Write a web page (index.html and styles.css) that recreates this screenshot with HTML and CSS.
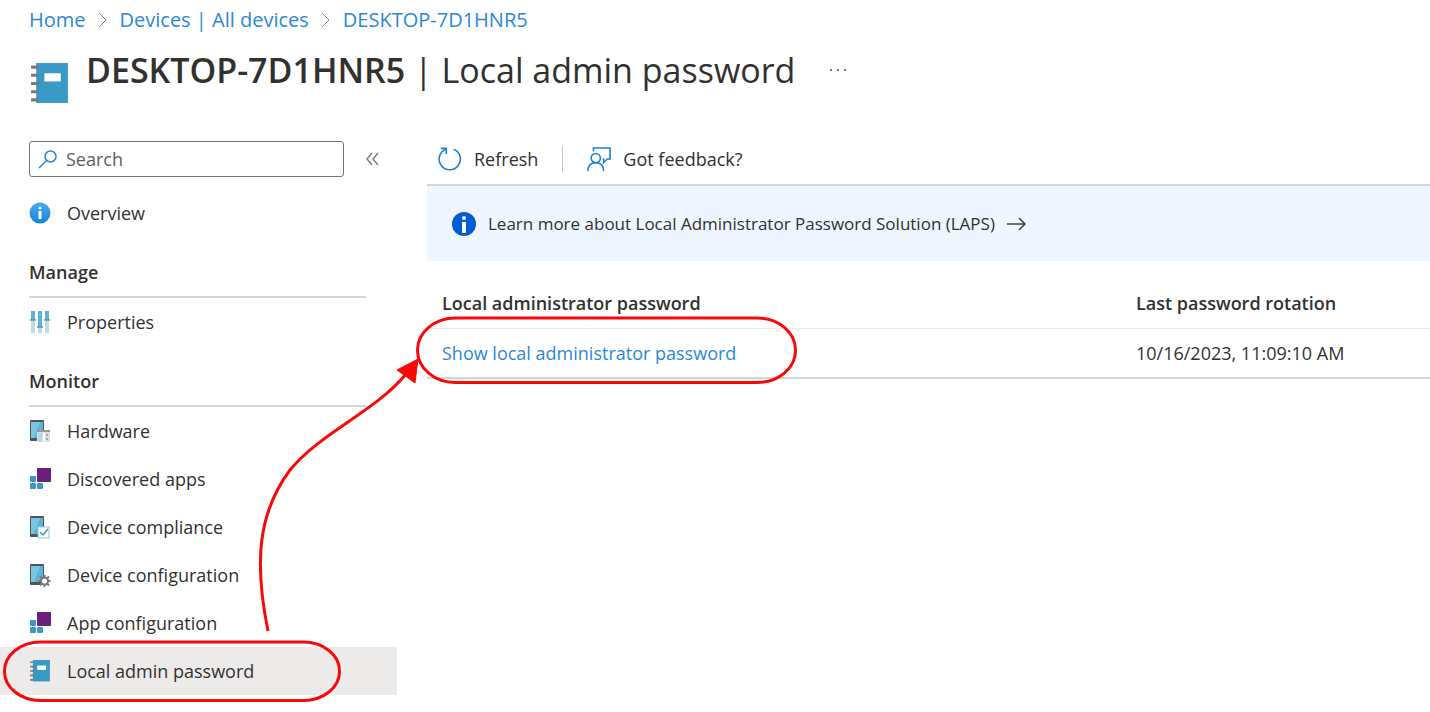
FILE: index.html
```html
<!DOCTYPE html>
<html lang="en">
<head>
  <meta charset="UTF-8">
  <meta name="viewport" content="width=device-width, initial-scale=1.0">
  <title>DESKTOP-7D1HNR5 | Local admin password</title>
  <link rel="stylesheet" href="styles.css">
</head>
<body>
  <!-- Shared icons -->
  <svg class="sprite" aria-hidden="true">
    <symbol id="notebook" viewBox="0 0 40 42">
      <rect x="7" y="1" width="31" height="39" fill="#3999c6"/>
      <path d="M2 5h7M2 13h7M2 21h7M2 29h7M2 37h7" stroke="#7a7a7a" stroke-width="3"/>
      <rect x="15" y="11" width="16" height="8" fill="#fff"/>
    </symbol>
    <symbol id="phone" viewBox="0 0 22 24">
      <rect x="1" y="1" width="14" height="21" rx="1" fill="#4f5559"/>
      <rect x="2" y="3" width="12" height="16" fill="#59b4d9"/>
      <path d="M2 3h9L5 19H2z" fill="#7cc5e2"/>
    </symbol>
    <symbol id="apps" viewBox="0 0 22 24">
      <rect x="1" y="9" width="6" height="6" rx="1" fill="#3999c6"/>
      <rect x="1" y="16" width="6" height="6" rx="1" fill="#3999c6"/>
      <rect x="8" y="16" width="6" height="6" rx="1" fill="#3999c6"/>
      <rect x="8" y="1" width="14" height="14" rx="1" fill="#68217a"/>
    </symbol>
  </svg>

  <header class="header">
    <nav class="breadcrumb" aria-label="Breadcrumb">
      <a href="#">Home</a>
      <svg class="chevron" viewBox="0 0 10 16"><path d="M1 1l7 7-7 7"/></svg>
      <a href="#">Devices | All devices</a>
      <svg class="chevron" viewBox="0 0 10 16"><path d="M1 1l7 7-7 7"/></svg>
      <a href="#">DESKTOP-7D1HNR5</a>
    </nav>
    <div class="title-row">
      <svg class="title-icon"><use href="#notebook"/></svg>
      <h1><strong>DESKTOP-7D1HNR5</strong> | Local admin password</h1>
      <button class="more" aria-label="More">
        <svg width="18" height="4" viewBox="0 0 18 4"><path d="M1 1h2v2H1zM8 1h2v2H8zM15 1h2v2h-2z" fill="#777"/></svg>
      </button>
    </div>
  </header>

  <div class="content">
    <aside class="sidebar">
      <div class="search-row">
        <div class="search-box">
          <svg width="20" height="20" viewBox="0 0 20 20" fill="none" stroke="#2b88d8" stroke-width="1.500"><circle cx="12.500" cy="7.500" r="5.500"/><path d="M8.500 11.500L1 19"/></svg>
          <input type="text" id="search" placeholder="Search" aria-label="Search">
        </div>
        <button class="collapse" aria-label="Collapse menu">
          <svg width="13" height="14" viewBox="0 0 13 14" fill="none" stroke="#777" stroke-width="1.300"><path d="M6 1L1 7l5 6M12 1L7 7l5 6"/></svg>
        </button>
      </div>

      <nav class="menu">
        <a class="menu-item" href="#">
          <svg class="icon" viewBox="0 0 22 24">
            <defs><linearGradient id="infoBlue" x1="0" y1="0" x2="0" y2="1"><stop offset="0" stop-color="#50a8f0"/><stop offset="1" stop-color="#1484dc"/></linearGradient></defs>
            <circle cx="11" cy="12" r="10.500" fill="url(#infoBlue)"/>
            <circle cx="11" cy="7" r="1.500" fill="#fff"/><path d="M9.500 10h3v8h-3z" fill="#fff"/>
          </svg>
          Overview
        </a>

        <h2>Manage</h2>
        <a class="menu-item" href="#">
          <svg class="icon" viewBox="0 0 22 24">
            <path d="M2 1h4v22H2zM9 1h4v22H9zM16 1h4v22h-4z" fill="#b8dcec"/>
            <path d="M2 1h4v9H2zM9 1h4v16H9zM16 1h4v9h-4z" fill="#59b4d9"/>
            <path d="M1 10h6M8 17h6M15 10h6" stroke="#8a8a8a" stroke-width="1.500"/>
          </svg>
          Properties
        </a>

        <h2>Monitor</h2>
        <a class="menu-item" href="#">
          <svg class="icon" viewBox="0 0 22 24">
            <use href="#phone"/>
            <rect x="8" y="11" width="13" height="12" fill="#dedede"/>
            <path d="M8 11h13v2H8z" fill="#999"/>
            <path d="M9 14h4v8H9z" fill="#a9d8ee"/>
            <path d="M14 14h2v8h-2z" fill="#fff"/>
            <path d="M17 15h2v2h-2zM17 19h2v2h-2z" fill="#a5a5a5"/>
          </svg>
          Hardware
        </a>
        <a class="menu-item" href="#"><svg class="icon"><use href="#apps"/></svg>Discovered apps</a>
        <a class="menu-item" href="#">
          <svg class="icon" viewBox="0 0 22 24">
            <use href="#phone"/>
            <rect x="9" y="12" width="11" height="11" fill="#fff" stroke="#8cc8e4"/>
            <path d="M11 17l3 3 5-6" fill="none" stroke="#3999c6" stroke-width="1.500"/>
          </svg>
          Device compliance
        </a>
        <a class="menu-item" href="#">
          <svg class="icon" viewBox="0 0 22 24">
            <use href="#phone"/>
            <path d="M15.500 12v12M9.500 18h12M11 13.500l9 9M20 13.500l-9 9" stroke="#7a7a7a" stroke-width="2"/>
            <circle cx="15.500" cy="18" r="3.500" fill="#fff" stroke="#7a7a7a" stroke-width="2"/>
          </svg>
          Device configuration
        </a>
        <a class="menu-item" href="#"><svg class="icon"><use href="#apps"/></svg>App configuration</a>
        <a class="menu-item selected" href="#"><svg class="icon"><use href="#notebook"/></svg>Local admin password</a>
      </nav>
    </aside>

    <main class="main">
      <div class="toolbar">
        <button class="command">
          <svg width="24" height="24" viewBox="0 0 26 26" fill="none" stroke="#1a80d4" stroke-width="1.700"><path d="M17 2.500a11.500 11.500 0 1 1-8.500 0"/><path d="M3 1.500h6v6"/></svg>
          Refresh
        </button>
        <span class="divider"></span>
        <button class="command">
          <svg width="24" height="24" viewBox="0 0 26 26" fill="none" stroke="#1a80d4" stroke-width="1.700"><path d="M7 5V1h18v12h-3l-4 4v-4h-1"/><circle cx="9.500" cy="12" r="5"/><path d="M1 26c0-6 3-9 8.500-9s8.500 3 8.500 9"/></svg>
          Got feedback?
        </button>
      </div>

      <a class="banner" href="#">
        <svg width="24" height="24" viewBox="0 0 24 24"><circle cx="12" cy="12" r="12" fill="#015cda"/><circle cx="12" cy="6" r="2" fill="#fff"/><path d="M10 10h4v11h-4z" fill="#fff"/></svg>
        Learn more about Local Administrator Password Solution (LAPS)
        <svg width="20" height="14" viewBox="0 0 20 14" fill="none" stroke="#444" stroke-width="1.500"><path d="M0 7h18M12 1l6 6-6 6"/></svg>
      </a>

      <table class="passwords">
        <thead>
          <tr>
            <th>Local administrator password</th>
            <th>Last password rotation</th>
          </tr>
        </thead>
        <tbody>
          <tr>
            <td><a href="#">Show local administrator password</a></td>
            <td>10/16/2023, 11:09:10 AM</td>
          </tr>
        </tbody>
      </table>
    </main>
  </div>

  <!-- Walkthrough markup drawn over the page -->
  <svg class="annotation" width="820" height="712" viewBox="0 0 820 712" fill="none" stroke="#f80808" stroke-width="3" aria-hidden="true">
    <rect x="417.500" y="318" width="378" height="64.500" rx="38" ry="32"/>
    <rect x="4.500" y="642" width="335" height="58.500" rx="36" ry="29"/>
    <path d="M268 631C254 562 258 513 290 470C320 433 376 411 406 374"/>
    <path d="M418 359L415 383L397 370Z" fill="#f80808" stroke-width="1"/>
  </svg>
</body>
</html>
```
FILE: styles.css
```css
* {
  box-sizing: border-box;
}
body {
  margin: 0;
  position: relative;
  min-height: 100vh;
  font-family: "Open Sans", "Noto Sans", sans-serif;
  font-size: 18px;
  line-height: 24px;
  color: #323130;
  background-color: white;
}
a {
  color: #2b88d8;
  text-decoration: none;
}
button {
  padding: 0;
  border: none;
  background: none;
  font: inherit;
  color: inherit;
  cursor: pointer;
}
svg {
  flex: none;
}
.sprite {
  position: absolute;
  width: 0;
  height: 0;
}
.header {
  padding: 8px 29px 0;
}
.breadcrumb {
  display: flex;
  align-items: center;
  gap: 12px;
  font-size: 20px;
}
.chevron {
  width: 10px;
  height: 16px;
  fill: none;
  stroke: #888;
}
.title-row {
  display: flex;
  align-items: flex-start;
  margin-top: 12px;
}
.title-icon {
  width: 41px;
  height: 43px;
  margin: 18px 16px 0 0;
}
h1 {
  margin: 0;
  font-size: 34px;
  line-height: 52px;
  font-weight: 400;
}
h1 strong {
  font-weight: 600;
}
.more {
  display: flex;
  align-items: center;
  height: 52px;
  margin-left: 34px;
}
.content {
  display: flex;
  margin-top: 30px;
}
.sidebar {
  width: 397px;
  flex: none;
  padding: 6px 0 16px;
}
.search-row {
  display: flex;
  align-items: center;
  gap: 22px;
  padding-left: 29px;
  margin-bottom: 12px;
}
.search-box {
  display: flex;
  align-items: center;
  gap: 8px;
  width: 315px;
  height: 36px;
  padding: 0 8px;
  border: 1px solid #777;
  border-radius: 3px;
}
.search-box input {
  flex: 1;
  min-width: 0;
  padding: 0;
  border: none;
  outline: none;
  background: none;
  font: inherit;
}
.search-box input::placeholder {
  color: #605e5c;
}
.collapse {
  display: flex;
}
.menu-item {
  display: flex;
  align-items: center;
  gap: 16px;
  height: 48px;
  padding-left: 29px;
  color: #323130;
}
.menu-item.selected {
  background-color: #edebe9;
}
.icon {
  width: 22px;
  height: 24px;
}
.menu h2 {
  margin: 0 31px 0 29px;
  padding: 23px 0 12px;
  border-bottom: 2px solid #d8d6d4;
  font-size: 18px;
  line-height: 24px;
  font-weight: 600;
}
.main {
  flex: 1;
  min-width: 0;
  margin-left: 30px;
}
.toolbar {
  display: flex;
  align-items: center;
  gap: 24px;
  height: 51px;
  padding: 0 0 2px 11px;
  border-bottom: 2px solid #d8d6d4;
}
.command {
  display: flex;
  align-items: center;
  gap: 12px;
}
.divider {
  width: 1px;
  height: 26px;
  background-color: #c8c6c4;
}
.banner {
  display: flex;
  align-items: center;
  gap: 12px;
  height: 75px;
  padding-left: 25px;
  background-color: #eff6ff;
  color: #323130;
  font-size: 17px;
}
.passwords {
  width: 100%;
  margin-top: 17px;
  border-collapse: collapse;
  text-align: left;
}
.passwords th,
.passwords td {
  height: 50px;
  padding: 0 15px;
}
.passwords th {
  font-weight: 600;
  border-bottom: 1px solid #edebe9;
}
.passwords th:last-child {
  width: 309px;
}
.passwords td {
  border-bottom: 2px solid #d8d6d4;
}
.annotation {
  position: absolute;
  top: 0;
  left: 0;
  pointer-events: none;
}
```
